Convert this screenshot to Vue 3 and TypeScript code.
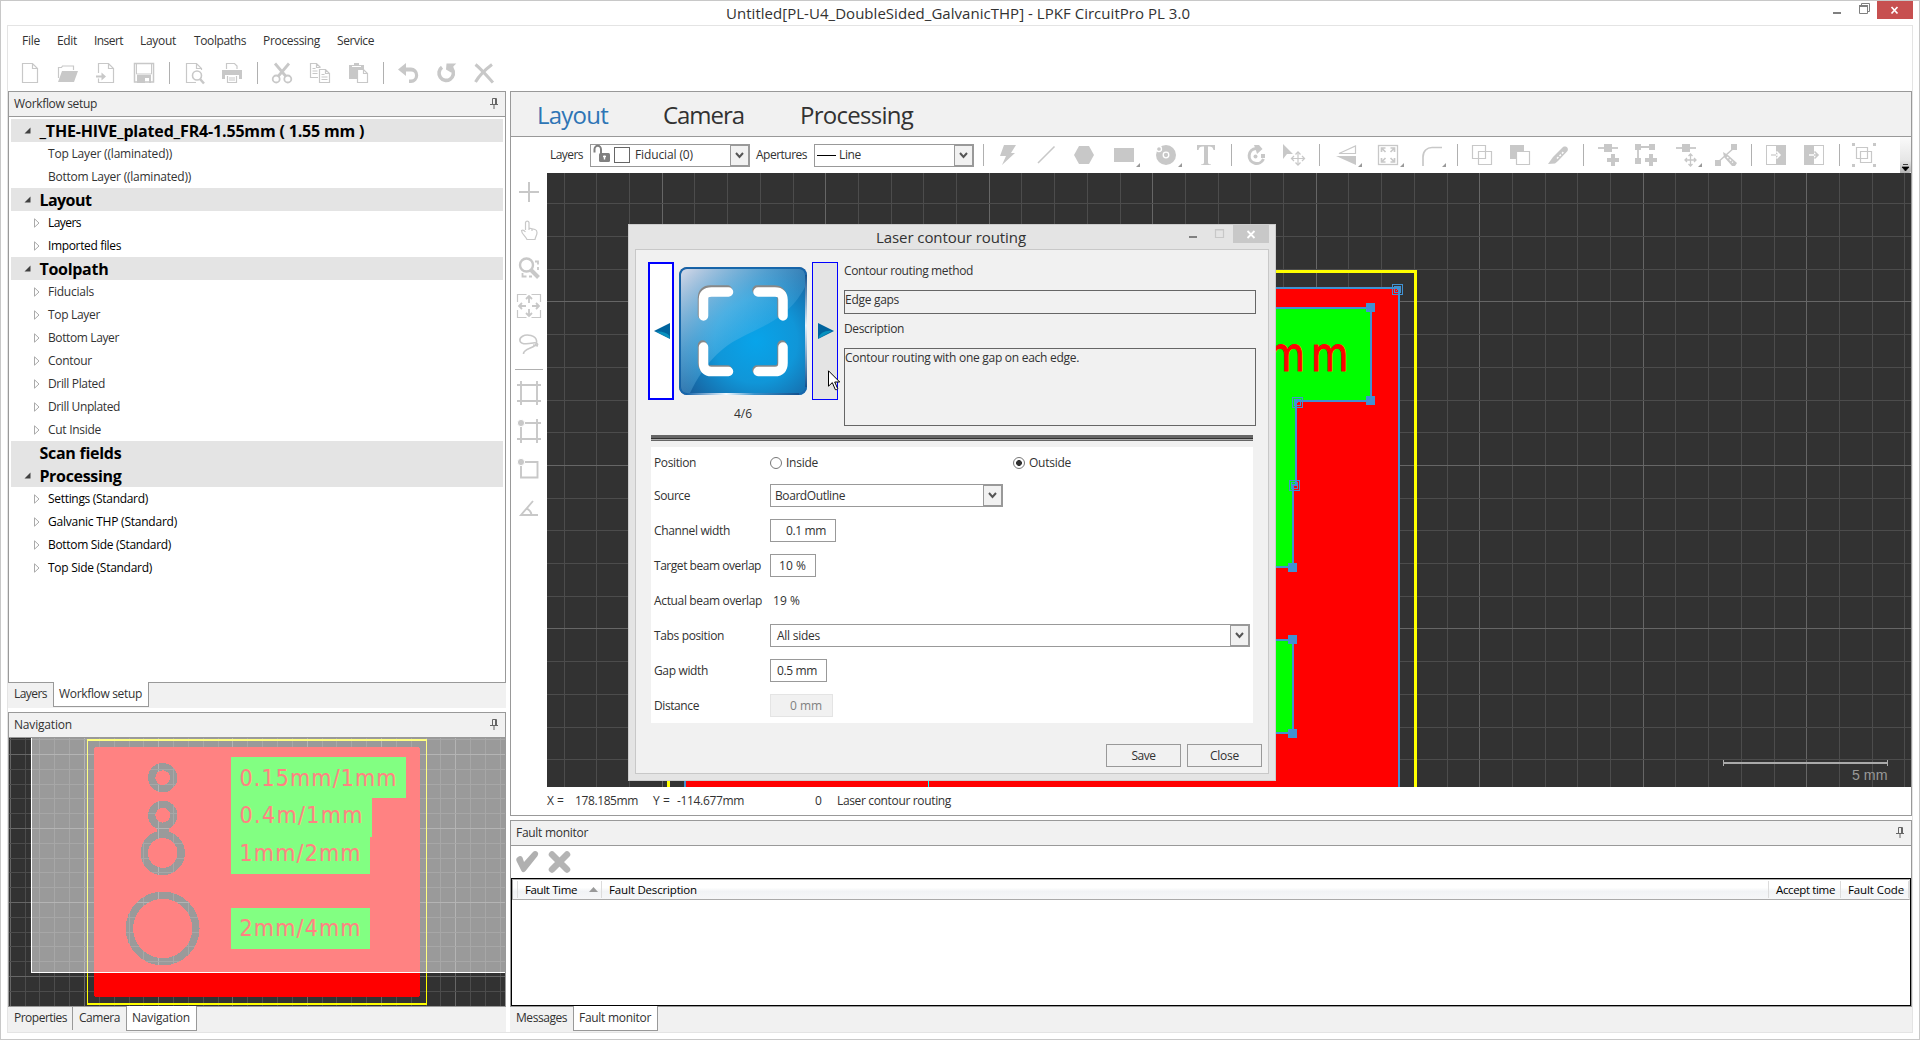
<script setup lang="ts">
interface Icon {
  x: number
  w?: number
  sep?: boolean
  art?: string
}

// Letter-spacing is tuned so each label occupies its designed width.
const vFit = {
  mounted(el: HTMLElement, binding: { value: number }) {
    const n = (el.textContent || '').length
    const natural = el.getBoundingClientRect().width
    if (n) el.style.letterSpacing = ((binding.value - natural) / n).toFixed(3) + 'px'
  },
}

const s = (d: string, w = 1.2) => `<path d="${d}" fill="none" stroke="#c8c8c8" stroke-width="${w}"/>`
const f = (d: string) => `<path d="${d}" fill="#c8c8c8"/>`
const tri = '<path d="M24 20v4h-4z" fill="#999"/>'

// Places icons of a strip one after another, from their left edges.
function strip(items: Icon[], start: number) {
  let pos = start
  return items.map((i) => {
    const w = i.w ?? (i.sep ? 1 : 24)
    const gap = i.x - pos
    pos = i.x + w
    return { ...i, w, gap }
  })
}

const mainIcons = strip(
  [
    { x: 20, art: s('M2.5 2.5h10l5 5v14h-15zM12.5 2.5v5h5') },
    { x: 58, art: s('M.5 17V6.500h3l1-1.500h11v4') + f('M0 21L4 10h16l-4 11z') },
    { x: 94, art: s('M4.500 12V2.500h10l5 5v14h-15v-4M14.500 2.500v5h5') + s('M2 15.500h8', 2) + f('M7.500 11.500l4.500 4-4.500 4z') },
    { x: 132, art: s('M2.500 2.500h19v18.500h-19z', 1.500) + f('M5 14h14v8h-2v-5h-4v5H5z') + s('M4.500 3v10h15V3', 1) },
    { x: 169, sep: true },
    { x: 184, art: s('M12 21.500H2.500v-19h10l5 5V9M12.500 2.500v5h5') + '<circle cx="13" cy="14.500" r="4.500" fill="#fff" stroke="#c8c8c8" stroke-width="1.600"/>' + s('M16 18l4 4.500', 2.500) },
    { x: 220, art: s('M6.500 8V2.500h8l2.500 2.500v3', 1.200) + f('M2 9h20v9h-3v-4H5v4H2z') + s('M7.500 15v6.500h9V15M9 17h6M9 19h6') },
    { x: 257, sep: true },
    { x: 270, art: s('M5 2.500l11 13M19 2.500L8 15.500', 2.800) + s('M9.700 18a3.500 3.500 0 1 1-7 0a3.500 3.500 0 1 1 7 0M21.300 18a3.500 3.500 0 1 1-7 0a3.500 3.500 0 1 1 7 0', 1.800) },
    { x: 308, art: s('M10 16.500H2.500v-14h6l4 4M8.500 2.500v4h4M4.500 7.500h3M4.500 10h5M4.500 12.500h5') + s('M11.500 8.500h6l4 4v9h-10zM17.500 8.500v4h4M13.500 13.500h3M13.500 16h6M13.500 18.500h6') },
    { x: 346, art: f('M3 4h5V2h5v2h5v4h-5v10H3z') + '<path d="M6 5.500h9" stroke="#fff"/>' + '<path d="M11.500 8.500h6l4 4v9h-10z" fill="#fff" stroke="#c8c8c8" stroke-width="1.200"/>' + s('M17.500 8.500v4h4') },
    { x: 383, sep: true },
    { x: 396, art: f('M2 8.500L10 2v4.500h5a7 7.500 0 0 1 0 15.500h-2v-3.500h2a4 4 0 0 0 0-8h-5V15z') },
    { x: 434, art: s('M8 6.300a7.200 7.200 0 1 0 10.300 2', 3.600) + f('M12.500 2.500h9.800l-3 3 1.200 5.500-3.500.5-5-3z') },
    { x: 472, art: s('M3.500 3.500C9 8 16 16 21 21.500', 3) + s('M20 3.500C14 8 7 15 3.500 21', 3) },
  ],
  8,
)

const drawIcons = strip(
  [
    { x: 983, sep: true },
    { x: 996, art: f('M8 2h12l-5 8h4L6 22l4-9H4z') },
    { x: 1034, art: s('M4 20L20.500 3.500', 1.600) },
    { x: 1072, art: f('M7 3h10l5 9-5 9H7l-5-9z') },
    { x: 1116, art: '<rect x="-2" y="5" width="20" height="14" fill="#c8c8c8"/>' + tri },
    { x: 1158, art: '<circle cx="8" cy="12" r="10" fill="#c8c8c8"/><circle cx="8" cy="12" r="2.800" fill="none" stroke="#fff" stroke-width="1.300"/><circle cx="1" cy="6" r="2.500" fill="#c8c8c8" stroke="#fff" stroke-width="1.300"/>' + tri },
    { x: 1194, art: f('M3 2h18v5h-1.500c-.5-2.500-1.500-3.500-4.500-3.500h-1V19c0 2 .5 2.200 3 2.400V22H7v-.6c2.500-.2 3-.4 3-2.400V3.500H9C6 3.500 5 4.500 4.500 7H3z') },
    { x: 1231, sep: true },
    { x: 1243, art: s('M13 5.500a7.500 7.500 0 1 0 7.500 10.500', 3) + f('M11 2h5l3.500 4-5.500 5-1-3.500z') + f('M18 11h4v4h-4z') + '<circle cx="12.500" cy="13.500" r="2" fill="#c8c8c8"/>' },
    { x: 1282, art: f('M1 1v15l4-5 6 0z') + s('M16 9v13M9 15.500h13.500', 1.200) + s('M13.500 11.500l2.500-2.500 2.500 2.500M13.500 19.500l2.500 2.500 2.500-2.500M12 13l-2.500 2.500L12 18M20 13l2.500 2.500L20 18', 1.300) },
    { x: 1319, sep: true },
    { x: 1338, art: s('M17.500 3v7.500H1z', 1.200) + f('M-2 13h20v9z') + tri },
    { x: 1380, art: '<rect x="-1.500" y="2.500" width="19" height="19" fill="none" stroke="#c8c8c8" stroke-width="1.300"/>' + s('M1.500 9V5h4M1.500 5l4 4M14.500 9V5h-4M14.500 5l-4 4M1.500 15v4h4M1.500 19l4-4M14.500 15v4h-4M14.500 19l-4-4', 1.700) + tri },
    { x: 1422, art: s('M1 23V14C1 8 5 4.500 10 4.500h10', 1.700) + tri },
    { x: 1457, sep: true },
    { x: 1470, art: s('M2.500 2.500h13v13h-13zM8.500 8.500h13v13h-13z') },
    { x: 1508, art: f('M2 2h14v6H8v8H2z') + s('M8.500 8.500h13v13h-13z') },
    { x: 1546, art: f('M2 21l5-7L17 4c3-1.500 6 1 4.500 4L12 18l-3 2.500z') + '<path d="M11 15.500L18.500 8" stroke="#fff" stroke-width="1.500" stroke-dasharray="2 1.500"/>' },
    { x: 1583, sep: true },
    { x: 1597, art: s('M1 5h20', 1.800) + f('M7 1h8v8H7zM14 11h4v4h4v4h-4v4h-4v-4h-4v-4h4z') },
    { x: 1634, art: s('M4 4h17M4 4v17', 1.800) + f('M1 1h6v6H1zM15 1h6v6h-6zM1 15h6v6H1zM15 11h4v4h4v4h-4v4h-4v-4h-4v-4h4z') },
    { x: 1678, art: s('M-2 5h20', 1.800) + f('M4 1h8v8H4z') + s('M12.500 11v12M7 17h11M10.500 13l2-2 2 2M10.500 21l2 2 2-2M9 15l-2 2 2 2M16 15l2 2-2 2', 1.300) + tri },
    { x: 1714, art: s('M3 20L21 4', 1.500) + f('M17 1h6v6h-6zM1 17h6v6H1zM9 9l5 3 9 8-2 3-3 0-8-9z') + '<path d="M13 14l6 5.500" stroke="#fff" stroke-width="1.300" stroke-dasharray="2 1.500"/>' },
    { x: 1751, sep: true },
    { x: 1764, art: '<rect x="2.500" y="2.500" width="19" height="19" fill="none" stroke="#c8c8c8"/>' + f('M12 2h10v20H12z') + s('M7 12h5') + '<path d="M12 12h4M12.500 8.500L16 12l-3.500 3.500" fill="none" stroke="#fff" stroke-width="1.500"/>' },
    { x: 1802, art: '<rect x="2.500" y="2.500" width="19" height="19" fill="none" stroke="#c8c8c8"/>' + f('M2 2h10v20H2z') + '<path d="M7 12h5" stroke="#fff" stroke-width="1.500"/>' + s('M12 12h4M12.500 8.500L16 12l-3.500 3.500', 1.600) },
    { x: 1839, sep: true },
    { x: 1852, art: s('M4.500 4.500h11v11h-11zM8.500 8.500h11v11h-11z') + f('M0 0h3v3H0zM21 0h3v3h-3zM0 21h3v3H0zM21 21h3v3h-3z') },
  ],
  974,
)

const sideIcons = [
  s('M12 2v20M2 12h20', 2),
  s('M8.500 12V4.500a1.800 1.800 0 0 1 3.500 0V10l6 1.500q2 .5 2 3c0 3-1.500 4-2 7h-8C8.500 18 4.500 16 4.500 12.500q2-1 4 1.500M12 10v2M15 11v2'),
  '<circle cx="9.500" cy="9" r="6.500" fill="none" stroke="#c8c8c8" stroke-width="2.400"/>' + s('M14 14l7.500 7.500', 4) + s('M18 5.500h3v3M21 11v3M5.500 17v3.500h4M12 20.500h3', 1.800),
  s('M.5 8V.5h9M14.500 .5h9V8M23.500 16v7.500h-9M9.500 23.500h-9V16') + s('M12 9V2M12 15v7M9 12H2M15 12h7M9 5l3-3 3 3M9 19l3 3 3-3M5 9l-3 3 3 3M19 9l3 3-3 3', 1.800),
  s('M6.500 22C6 18 12 17 16.500 14.500S21 5.500 14 3.500 2 5.500 3 9s8 3 13 2 4 1 5 2M21 14l-5-1', 1.600),
]
const sideIcons2 = [
  s('M0 4h24M0 20h24M4 0v24M20 0v24', 1.900),
  s('M4 4h20M0 20h24M4 4v20M20 0v24', 1.900) + '<circle cx="4" cy="4" r="3.600" fill="#c8c8c8" stroke="#fff"/>',
  s('M4 5h16.500v15.500H4z', 1.900) + '<circle cx="4" cy="5" r="3.600" fill="#c8c8c8" stroke="#fff"/>',
  s('M16 6L4 20h17M9 13.500q5 1.500 5.500 6.500', 1.900),
]

const menus: [string, number, number][] = [
  ['File', 18, 17], ['Edit', 20, 17], ['Insert', 29, 17], ['Layout', 36, 18],
  ['Toolpaths', 52, 17], ['Processing', 57, 17], ['Service', 37, 0],
]

interface Row { t: string; w: number; head?: boolean; mark?: string; dark?: boolean }
const tree: Row[] = [
  { t: '_THE-HIVE_plated_FR4-1.55mm ( 1.55 mm )', w: 325, head: true, mark: 'open' },
  { t: 'Top Layer ((laminated))', w: 124 },
  { t: 'Bottom Layer ((laminated))', w: 143 },
  { t: 'Layout', w: 52, head: true, mark: 'open' },
  { t: 'Layers', w: 33, mark: 'shut', dark: true },
  { t: 'Imported files', w: 73, mark: 'shut', dark: true },
  { t: 'Toolpath', w: 69, head: true, mark: 'open' },
  { t: 'Fiducials', w: 46, mark: 'shut' },
  { t: 'Top Layer', w: 52, mark: 'shut' },
  { t: 'Bottom Layer', w: 71, mark: 'shut' },
  { t: 'Contour', w: 44, mark: 'shut' },
  { t: 'Drill Plated', w: 57, mark: 'shut' },
  { t: 'Drill Unplated', w: 72, mark: 'shut' },
  { t: 'Cut Inside', w: 53, mark: 'shut' },
  { t: 'Scan fields', w: 82, head: true },
  { t: 'Processing', w: 82, head: true, mark: 'open' },
  { t: 'Settings (Standard)', w: 100, mark: 'shut', dark: true },
  { t: 'Galvanic THP (Standard)', w: 129, mark: 'shut', dark: true },
  { t: 'Bottom Side (Standard)', w: 123, mark: 'shut', dark: true },
  { t: 'Top Side (Standard)', w: 104, mark: 'shut', dark: true },
]

// Grid lines of a view; every fifth one, counted from the origin, is a major line.
function lines(origin: number, step: number, from: number, to: number) {
  const out: { p: number; major: boolean }[] = []
  for (let k = Math.ceil((from - origin) / step); origin + k * step < to; k++) {
    out.push({ p: Math.floor(origin + k * step), major: k % 5 === 0 })
  }
  return out.sort((a, b) => Number(a.major) - Number(b.major))
}
const gx = lines(662.2, 32.7, 547, 1911)
const gy = lines(301.92, 32.7, 173, 787)
const nx = lines(10.2, 14.85, 9, 505)
const ny = lines(754.4, 14.8, 738, 1006)

const handles = [[1366, 303], [1366, 396], [1288, 563], [1288, 635], [1288, 729]]
const nodes = [[1392, 284], [1292, 397], [1289, 480]]

const labels: [string, number, number][] = [
  ['0.15mm/1mm', 786, 157], ['0.4m/1mm', 823.5, 123], ['1mm/2mm', 861, 121], ['2mm/4mm', 936.5, 121],
]
</script>

<template>
  <div class="win">
    <header class="title">
      <span class="title-text"><span v-fit="464">Untitled[PL-U4_DoubleSided_GalvanicTHP] - LPKF CircuitPro PL 3.0</span></span>
      <svg width="86" height="20" viewBox="1827 1 86 20">
        <rect x="1833" y="12" width="8" height="2" fill="#808080" />
        <path d="M1861.500 5v-1.500h8v8H1868M1859.500 5.500h8v8h-8z" fill="none" stroke="#808080" />
        <path d="M1859 5h9v2h-9z" fill="#808080" />
        <rect x="1877" y="1" width="36" height="18" fill="#c75050" />
        <path d="M1891.500 7l6 6.500M1897.500 7l-6 6.500" stroke="#fff" stroke-width="1.700" />
      </svg>
    </header>

    <div class="frame">
      <nav class="menu">
        <span v-for="m in menus" :key="m[0]" :style="{ width: m[1] + m[2] + 'px' }"><span v-fit="m[1]">{{ m[0] }}</span></span>
      </nav>
      <div class="strip main-strip">
        <template v-for="i in mainIcons" :key="i.x">
          <i v-if="i.sep" class="sep" :style="{ marginLeft: i.gap + 'px' }" />
          <svg v-else width="24" height="24" :style="{ marginLeft: i.gap + 'px' }" v-html="i.art" />
        </template>
      </div>

      <div class="body">
        <div class="left">
          <section class="panel tree-panel">
            <h2 class="phead"><span v-fit="83">Workflow setup</span>
              <svg width="9" height="11" viewBox="0 0 9 11"><path d="M2.500 6V.5h4V6M0 6.500h8M4 7v4M5.500 1v5" fill="none" stroke="#666" /></svg>
            </h2>
            <ul class="tree">
              <li v-for="r in tree" :key="r.t" :class="{ head: r.head, dark: r.dark }">
                <b class="mark">
                  <svg v-if="r.mark === 'open'" width="7" height="7"><path d="M6.500 .5v6h-6z" fill="#404040" /></svg>
                  <svg v-else-if="r.mark === 'shut'" width="6" height="10"><path d="M.5 .8v8.400L5 5z" fill="#fff" stroke="#aaa" /></svg>
                </b>
                <span v-fit="r.w">{{ r.t }}</span>
              </li>
            </ul>
          </section>
          <div class="tabs">
            <span class="tab t1"><span v-fit="33">Layers</span></span>
            <span class="tab on t2"><span v-fit="83">Workflow setup</span></span>
          </div>

          <section class="panel nav-panel">
            <h2 class="phead"><span v-fit="58">Navigation</span>
              <svg width="9" height="11" viewBox="0 0 9 11"><path d="M2.500 6V.5h4V6M0 6.500h8M4 7v4M5.500 1v5" fill="none" stroke="#666" /></svg>
            </h2>
            <svg class="map" width="496" height="268" viewBox="9 738 496 268" shape-rendering="crispEdges">
              <defs>
                <mask id="pads">
                  <rect x="94" y="747" width="326" height="250" rx="3" fill="#fff" />
                  <g fill="#fff" stroke="#000" stroke-width="7.300">
                    <circle cx="162.700" cy="777.700" r="11" /><circle cx="162.700" cy="815.300" r="11" />
                    <circle cx="162.700" cy="853" r="18.500" /><circle cx="162.700" cy="928.500" r="33.200" />
                  </g>
                  <rect x="157" y="828" width="12" height="5" fill="#000" />
                </mask>
              </defs>
              <rect x="9" y="738" width="496" height="268" fill="#323232" />
              <rect v-for="l in nx" :key="'x' + l.p" :x="l.p" y="738" width="1" height="268" :fill="l.major ? '#666' : '#4c4c4c'" />
              <rect v-for="l in ny" :key="'y' + l.p" x="9" :y="l.p" width="496" height="1" :fill="l.major ? '#666' : '#4c4c4c'" />
              <path d="M87 739h340v266H87zM88 741v262h338V741z" fill="#ff0" fill-rule="evenodd" />
              <rect x="94" y="747" width="326" height="250" fill="#f00" mask="url(#pads)" />
              <path d="M231 757h175v41h-34v39h-2v37H231zM231 908h139v41H231z" fill="#0f0" />
              <g class="plot" fill="#f00" transform="translate(239.500 0) scale(.9 1)">
                <text v-for="l in labels" :key="l[0]" x="0" :y="l[1]" :textLength="l[2] / 0.9">{{ l[0] }}</text>
              </g>
              <rect x="31" y="738" width="474" height="235" fill="#fff" opacity=".51" />
              <path d="M31 738h1v234h473v1H31z" fill="#fff" />
            </svg>
          </section>
          <div class="tabs">
            <span class="tab t3"><span v-fit="53">Properties</span></span>
            <span class="tab t4"><span v-fit="41">Camera</span></span>
            <span class="tab on t5"><span v-fit="58">Navigation</span></span>
          </div>
        </div>

        <div class="right">
          <section class="panel work">
            <div class="modes">
              <span class="sel"><span v-fit="71">Layout</span></span>
              <span><span v-fit="81">Camera</span></span>
              <span><span v-fit="113">Processing</span></span>
            </div>
            <div class="strip draw-strip">
              <span class="lab l1"><span v-fit="33">Layers</span></span>
              <div class="combo c160">
                <svg width="36" height="20" viewBox="0 0 36 20">
                  <path d="M1.500 7.500V4.500a3 3.500 0 0 1 6.500 0V9" fill="none" stroke="#808080" stroke-width="2" />
                  <rect x="6" y="8" width="11" height="9" rx="1.500" fill="#808080" />
                  <path d="M11.500 10.500v4M10 11.500h3" stroke="#fff" stroke-width="1.400" />
                  <rect x="21.500" y="2.500" width="15" height="15" fill="#fff" stroke="#666" />
                </svg>
                <span class="ctext c1"><span v-fit="58">Fiducial (0)</span></span>
                <b class="drop"><svg width="9" height="7"><path d="M1 1l3.500 4L8 1" fill="none" stroke="#555" stroke-width="2" /></svg></b>
              </div>
              <span class="lab l2"><span v-fit="51">Apertures</span></span>
              <div class="combo c160">
                <i class="rule" />
                <span class="ctext c2"><span v-fit="22">Line</span></span>
                <b class="drop"><svg width="9" height="7"><path d="M1 1l3.500 4L8 1" fill="none" stroke="#555" stroke-width="2" /></svg></b>
              </div>
              <template v-for="i in drawIcons" :key="i.x">
                <i v-if="i.sep" class="sep" :style="{ marginLeft: i.gap + 'px' }" />
                <svg v-else width="24" height="24" :style="{ marginLeft: i.gap + 'px' }" v-html="i.art" />
              </template>
              <b class="more"><svg width="7" height="9"><path d="M1 1.500h5M0 4h7L3.500 8z" fill="#000" stroke="#000" stroke-width=".7" /></svg></b>
            </div>
            <div class="stage">
              <div class="side">
                <svg v-for="(a, k) in sideIcons" :key="k" width="24" height="24" v-html="a" />
                <i class="hsep" />
                <svg v-for="(a, k) in sideIcons2" :key="k + 10" width="24" height="24" v-html="a" />
              </div>
              <svg class="canvas" width="1364" height="614" viewBox="547 173 1364 614" shape-rendering="crispEdges">
                <rect x="547" y="173" width="1364" height="614" fill="#323232" />
                <rect v-for="l in gx" :key="'x' + l.p" :x="l.p" y="173" width="1" height="614" :fill="l.major ? '#666' : '#4c4c4c'" />
                <rect v-for="l in gy" :key="'y' + l.p" x="547" :y="l.p" width="1364" height="1" :fill="l.major ? '#666' : '#4c4c4c'" />
                <path d="M668.500 790V271.500H1415.500V790" fill="none" stroke="#ff0" stroke-width="3" />
                <path d="M685 790V288H1399V790" fill="#f00" stroke="#4191d2" stroke-width="2" />
                <g fill="#0f0" stroke="#4191d2" stroke-width="2">
                  <path d="M1000 308H1371V401H1296V485H1293V567H1000z" />
                  <path d="M1000 640H1293V733H1000z" />
                </g>
                <text class="plot big" transform="translate(1354.500 371) scale(.8 1)" text-anchor="end" fill="#f00" stroke="#f00">mm</text>
                <rect x="928" y="770" width="1" height="17" fill="#0ff" />
                <rect v-for="h in handles" :key="h.join()" :x="h[0]" :y="h[1]" width="9" height="9" fill="#4191d2" />
                <g v-for="n in nodes" :key="n.join()" fill="none" stroke="#4191d2">
                  <rect :x="n[0] + 0.5" :y="n[1] + 0.5" width="10" height="10" />
                  <rect :x="n[0] + 2.5" :y="n[1] + 2.5" width="6" height="6" />
                  <path :d="`M${n[0] + 4} ${n[1] + 7}l3-3`" />
                </g>
                <path d="M1723 760h1v2h163v-2h1v6h-1v-2h-163v2h-1z" fill="#aaa" />
                <text x="1852" y="780" class="scale" fill="#999">5 mm</text>
              </svg>
            </div>
            <div class="status">
              <span class="s1"><span v-fit="17">X =</span></span>
              <span class="s2"><span v-fit="63">178.185mm</span></span>
              <span class="s3"><span v-fit="17">Y =</span></span>
              <span class="s4"><span v-fit="67">-114.677mm</span></span>
              <span class="s5">0</span>
              <span><span v-fit="114">Laser contour routing</span></span>
            </div>
          </section>

          <section class="panel fault">
            <h2 class="phead"><span v-fit="72">Fault monitor</span>
              <svg width="9" height="11" viewBox="0 0 9 11"><path d="M2.500 6V.5h4V6M0 6.500h8M4 7v4M5.500 1v5" fill="none" stroke="#666" /></svg>
            </h2>
            <div class="fbar">
              <svg width="56" height="24" viewBox="0 0 56 24">
                <path d="M3 7q2.500-2 4.500 .5l1.500 4.500L17.500 2.500q2.500-2.500 5-.5 1.500 1.500 0 4L10.500 21q-2.500 2.500-4 0L1.500 11Q.5 8.500 3 7z" fill="#b0b0b0" />
                <path d="M37 4.500l15 15M52 4.500l-15 15" stroke="#b4b4b4" stroke-width="6.500" stroke-linecap="round" />
              </svg>
            </div>
            <div class="table">
              <div class="thead">
                <i class="h0" />
                <span class="h1"><span v-fit="52">Fault Time</span><svg width="9" height="5"><path d="M0 5h9L4.500 0z" fill="#999" /></svg></span>
                <span class="h2"><span v-fit="88">Fault Description</span></span>
                <span class="h3"><span v-fit="59">Accept time</span></span>
                <span class="h4"><span v-fit="56">Fault Code</span></span>
              </div>
            </div>
          </section>
          <div class="tabs">
            <span class="tab t6"><span v-fit="51">Messages</span></span>
            <span class="tab on t7"><span v-fit="72">Fault monitor</span></span>
          </div>
        </div>
      </div>
    </div>

    <div class="dialog">
      <div class="dtitle">
        <span class="dtext"><span v-fit="150">Laser contour routing</span></span>
        <svg width="87" height="24" viewBox="1182 225 87 24">
          <rect x="1189" y="236" width="8" height="2" fill="#808080" />
          <path d="M1215.500 229.500h8v8h-8zM1215 230h9" fill="none" stroke="#c8c8c8" stroke-width="1.200" />
          <rect x="1233" y="225" width="36" height="18" fill="#c8c8c8" />
          <path d="M1247.500 231l7 7M1254.500 231l-7 7" stroke="#fff" stroke-width="1.800" />
        </svg>
      </div>
      <div class="dbody">
        <div class="chooser">
          <div class="arrow prev">
            <svg width="16" height="16"><path d="M0 8L16 0v16z" fill="#00649e" /><path d="M2 8.500Q12 8 15.500 13v2.500z" fill="#0aa0c8" opacity=".75" /></svg>
          </div>
          <div class="pic">
            <svg width="128" height="128" viewBox="0 0 128 128">
              <defs>
                <radialGradient id="g1" cx=".6" cy=".58" r=".72">
                  <stop offset="0" stop-color="#08a4ea" /><stop offset=".45" stop-color="#1096d8" /><stop offset="1" stop-color="#1a5490" />
                </radialGradient>
                <linearGradient id="g2" x1="0" y1="0" x2=".75" y2=".8">
                  <stop offset="0" stop-color="#dfe1ee" stop-opacity=".95" /><stop offset=".45" stop-color="#8ccbee" stop-opacity=".5" /><stop offset="1" stop-color="#3aa8e0" stop-opacity=".08" />
                </linearGradient>
                <linearGradient id="g3"><stop offset="0" stop-color="#1766ac" /><stop offset=".35" stop-color="#f4faff" /><stop offset=".6" stop-color="#3a93cc" /><stop offset="1" stop-color="#14528f" /></linearGradient>
                <linearGradient id="g4" x1="0" y1="0" x2="0" y2="1"><stop offset="0" stop-color="#14528f" /><stop offset=".45" stop-color="#e4f2fc" /><stop offset="1" stop-color="#14528f" /></linearGradient>
              </defs>
              <rect width="128" height="128" rx="8" fill="url(#g1)" />
              <path d="M2 8q0-6 6-6h112q6 0 6 6v12C105 60 68 62 44 82 26 97 18 112 11 126H8q-6 0-6-6z" fill="url(#g2)" />
              <rect x=".8" y=".8" width="126.400" height="126.400" rx="8" fill="none" stroke="#1766ac" stroke-width="1.600" />
              <rect x="8" y="126" width="112" height="2" fill="url(#g3)" />
              <rect x="126" y="8" width="2" height="112" fill="url(#g4)" />
              <g fill="none" stroke-width="9.500" stroke-linecap="round" stroke-linejoin="round">
                <g stroke="#888" transform="translate(-1 -1)">
                  <path d="M24.500 49V32q0-8 8-8h17M79 24h17q8 0 8 8v17M24.500 79v17q0 8 8 8h17M79 104h17q8 0 8-8V79" />
                </g>
                <path stroke="#fff" d="M24.500 49V32q0-7 8-7h17M79 25h17q8 0 8 8v16M24.500 80v16q0 8.500 8 8.500h17M79 104.500h17q8 0 8-8.500V80" />
              </g>
            </svg>
            <span class="count">4/6</span>
          </div>
          <div class="arrow next">
            <svg width="16" height="16"><path d="M16 8L0 0v16z" fill="#00649e" /><path d="M.5 15.500C1 10 8 7 14 8z" fill="#0aa0c8" opacity=".75" /></svg>
          </div>
          <div class="info">
            <span class="il i1"><span v-fit="129">Contour routing method</span></span>
            <div class="ibox b1"><span v-fit="54">Edge gaps</span></div>
            <span class="il i2"><span v-fit="60">Description</span></span>
            <div class="ibox b2"><span v-fit="234">Contour routing with one gap on each edge.</span></div>
          </div>
        </div>
        <div class="bar" />
        <div class="form">
          <div class="row r0">
            <label><span v-fit="42">Position</span></label>
            <span class="radio wide"><i /><span v-fit="32">Inside</span></span>
            <span class="radio"><i class="on" /><span v-fit="42">Outside</span></span>
          </div>
          <div class="row r1">
            <label><span v-fit="36">Source</span></label>
            <div class="combo c233"><span class="ctext c3"><span v-fit="70">BoardOutline</span></span><b class="drop"><svg width="9" height="7"><path d="M1 1l3.500 4L8 1" fill="none" stroke="#555" stroke-width="2" /></svg></b></div>
          </div>
          <div class="row"><label><span v-fit="76">Channel width</span></label><div class="inp w66"><span v-fit="40">0.1 mm</span></div></div>
          <div class="row"><label><span v-fit="107">Target beam overlap</span></label><div class="inp w46"><span v-fit="27">10 %</span></div></div>
          <div class="row"><label><span v-fit="108">Actual beam overlap</span></label><div class="plain"><span v-fit="27">19 %</span></div></div>
          <div class="row">
            <label><span v-fit="70">Tabs position</span></label>
            <div class="combo c480"><span class="ctext c4"><span v-fit="43">All sides</span></span><b class="drop"><svg width="9" height="7"><path d="M1 1l3.500 4L8 1" fill="none" stroke="#555" stroke-width="2" /></svg></b></div>
          </div>
          <div class="row"><label><span v-fit="54">Gap width</span></label><div class="inp w57"><span v-fit="40">0.5 mm</span></div></div>
          <div class="row"><label><span v-fit="45">Distance</span></label><div class="inp w63 off"><span v-fit="32">0 mm</span></div></div>
        </div>
        <div class="actions">
          <button><span v-fit="24">Save</span></button>
          <button><span v-fit="29">Close</span></button>
        </div>
      </div>
    </div>
    <svg class="cursor" width="13" height="21"><path d="M.5 .8v15.400l3.800-3.600 3 7q1.500 .8 2.400-1l-3-6.600h5z" fill="#fff" stroke="#000" /></svg>
  </div>
</template>

<style>
body { margin: 0; background: #fff; overflow: hidden; }
</style>

<style scoped>
* { box-sizing: border-box; }
.win { position: relative; width: 1920px; height: 1040px; border: 1px solid #c8c8c8; background: #fff; font: 12px/16px "Open Sans", "Noto Sans", sans-serif; color: #323232; padding: 0 6px; overflow: hidden; }
span { white-space: nowrap; }
svg { display: block; flex: none; overflow: visible; }
.title { height: 24px; display: flex; }
.title-text { flex: 1; padding-left: 719px; font-size: 15px; line-height: 24px; }
.frame { height: 1008px; border: 1px solid #e4e4e4; }
.menu { height: 32px; display: flex; align-items: center; padding: 0 0 2px 14px; }
.menu > span { flex: none; }
.strip { display: flex; align-items: center; }
.main-strip { height: 33px; padding-bottom: 3px; }
.sep { flex: none; width: 1px; height: 22px; background: #b0b0b0; }
.body { display: flex; gap: 4px; }
.left { width: 498px; flex: none; }
.right { width: 1402px; flex: none; }
.panel { border: 1px solid #999; }
.phead { margin: 0; height: 25px; padding: 0 6px 0 5px; background: #f1f1f1; border-bottom: 1px solid #999; display: flex; justify-content: space-between; align-items: center; font-size: 12px; font-weight: 400; }
.phead svg { margin-top: -2px; }
.tree-panel { height: 592px; }
.tree { list-style: none; margin: 2px 2px 0; padding: 0; }
.tree li { height: 23px; display: flex; align-items: center; padding: 0 0 0 37px; }
.mark { width: 15px; flex: none; margin-left: -15px; padding-left: 1px; }
.tree li.head { background: #e4e4e4; color: #000; font-size: 16px; font-weight: 700; padding-left: 28.4px; padding-top: 1px; }
.head .mark { padding-left: 0; margin-top: -2px; }
.tree li.dark { color: #000; }
.tabs { height: 25px; background: #f1f1f1; display: flex; }
.tab { height: 23px; padding-top: 3px; flex: none; }
.tab.on { margin-top: -1px; height: 25px; padding-top: 4px; background: #fff; border: 1px solid #999; border-top: 0; }
.t1 { width: 45px; padding-left: 6px; }
.t2 { width: 96px; padding-left: 5px; }
.t3 { width: 65px; padding-left: 6px; border-right: 1px solid #999; }
.t4 { width: 53px; padding-left: 6px; }
.t5 { width: 71px; padding-left: 5px; }
.t6 { width: 63px; padding-left: 6px; }
.t7 { width: 85px; padding-left: 5px; }
.nav-panel { margin-top: 4px; height: 295px; overflow: hidden; }
.plot { font-family: "DejaVu Sans", sans-serif; font-weight: 400; font-size: 23px; stroke: #f00; stroke-width: .2; stroke-linejoin: round; }
.plot.big { font-size: 48px; stroke-width: 1.2; letter-spacing: 7.6px; }
.scale { font: 14.2px "Liberation Sans", sans-serif; }
.work { height: 725px; }
.modes { height: 45px; background: #f1f1f1; border-bottom: 1px solid #999; display: flex; align-items: center; padding: 2px 0 0 26px; font-size: 24px; line-height: 32px; }
.modes > span { width: 137px; }
.modes > span:first-child { width: 126px; }
.modes .sel { color: #2e75b5; }
.draw-strip { height: 36px; padding-left: 39px; }
.lab { flex: none; }
.l1 { width: 40px; }
.l2 { width: 58px; margin-left: 6px; }
.combo { height: 23px; border: 1px solid #999; background: #fff; display: flex; align-items: center; flex: none; }
.draw-strip .combo > svg { margin-left: 2px; }
.c160 { width: 160px; }
.c233 { width: 233px; }
.c480 { width: 480px; }
.ctext { flex: 1; }
.c1 { padding-left: 6px; }
.c2 { padding-left: 3px; }
.c3 { padding-left: 4px; }
.c4 { padding-left: 6px; }
.rule { width: 19px; height: 1px; background: #000; margin-left: 2px; }
.drop { width: 19px; height: 21px; border: 1px solid #999; background: #f1f1f1; display: flex; align-items: center; justify-content: center; }
.more { width: 11px; height: 36px; margin-left: 24px; background: linear-gradient(#fafafa, #e6e6e6 65%, #b4b4b4); border-radius: 0 2px 2px 0; padding: 26px 0 0 2px; flex: none; }
.stage { display: flex; height: 614px; }
.side { width: 36px; padding: 7px 0 0 6px; flex: none; display: flex; flex-direction: column; gap: 14px; }
.hsep { width: 28px; height: 1px; margin: -1px 0 -3px -2px; background: #b0b0b0; flex: none; }
.canvas { overflow: hidden; }
.status { height: 28px; padding: 0 0 1px 36px; display: flex; align-items: center; }
.s1 { width: 28px; }
.s2 { width: 78px; }
.s3 { width: 24px; }
.s4 { width: 138px; }
.s5 { width: 22px; }
.fault { margin-top: 4px; height: 187px; }
.fbar { height: 32px; padding: 4px 0 0 4px; }
.table { height: 128px; border: 1px solid #000; }
.thead { height: 21px; border: 1px solid #aaa; border-right-color: #ddd; background: linear-gradient(#fff 40%, #f1f3f5 60%, #f6f7f8); display: flex; align-items: center; color: #000; font-size: 11.5px; }
.h0 { width: 5px; height: 17px; border-right: 1px solid #ddd; }
.thead span[class] { height: 17px; display: flex; align-items: center; border-right: 1px solid #dcdcdc; }
.h1 { width: 84px; padding-left: 7px; gap: 12px; }
.h2 { flex: 1; padding-left: 7px; }
.h3 { width: 72px; padding-left: 7px; }
.h4 { width: 68px; padding-left: 7px; }

.dialog { position: absolute; left: 627px; top: 223px; width: 648px; height: 557px; background: #e4e4e4; border: 1px solid #ccc; padding: 0 6px; }
.dtitle { height: 24px; display: flex; }
.dtext { flex: 1; padding-left: 241px; font-size: 15px; line-height: 24px; }
.dbody { height: 525px; border: 1px solid #c8c8c8; background: #f1f1f1; }
.chooser { height: 185px; padding: 12px 0 0 12px; display: flex; }
.arrow { width: 26px; height: 138px; border: 1px solid #00f; background: #e4e4e4; display: flex; align-items: center; justify-content: center; flex: none; }
.prev { border-width: 2px; background: #fff; padding-left: 2px; }
.next { padding-left: 2px; }
.pic { width: 128px; flex: none; margin: 5px 5px 0; display: flex; flex-direction: column; align-items: center; }
.count { margin-top: 11px; }
.info { width: 412px; flex: none; margin-left: 6px; }
.il { display: block; }
.i1 { height: 28px; padding-top: 1px; }
.i2 { height: 34px; padding-top: 7px; }
.ibox { border: 1px solid #666; padding: 1px 0 0; }
.b1 { height: 24px; }
.b2 { height: 78px; }
.bar { width: 602px; height: 6px; margin-left: 15px; background: linear-gradient(#666 3px, #323232 3px 4px, #aaa 4px 5px, #666 5px); }
.form { width: 602px; height: 276px; margin: 6px 0 0 15px; background: #fff; }
.row { height: 35px; display: flex; align-items: center; padding-left: 3px; }
.r0 { height: 32px; }
.r1 { height: 33px; margin-bottom: 1px; }
.row label { width: 116px; flex: none; }
.radio { display: flex; align-items: center; gap: 4px; }
.radio.wide { width: 243px; }
.radio i { width: 12px; height: 12px; border: 1px solid #777; border-radius: 50%; background: #fff; flex: none; }
.radio i.on { background: radial-gradient(circle, #323232 2.6px, #fff 3.2px); }
.inp { height: 23px; border: 1px solid #999; display: flex; align-items: center; justify-content: flex-end; padding-right: 9px; }
.inp.off { background: #f1f1f1; border-color: #e4e4e4; color: #808080; padding-right: 10px; }
.w66 { width: 66px; }
.w46 { width: 46px; }
.w57 { width: 57px; }
.w63 { width: 63px; }
.plain { padding-left: 3px; }
.actions { display: flex; justify-content: flex-end; gap: 6px; padding: 21px 6px 0 0; }
button { width: 75px; height: 23px; padding: 0; border: 1px solid #999; background: #f1f1f1; font: inherit; color: inherit; border-radius: 0; }
.cursor { position: absolute; left: 827px; top: 369px; }
</style>
